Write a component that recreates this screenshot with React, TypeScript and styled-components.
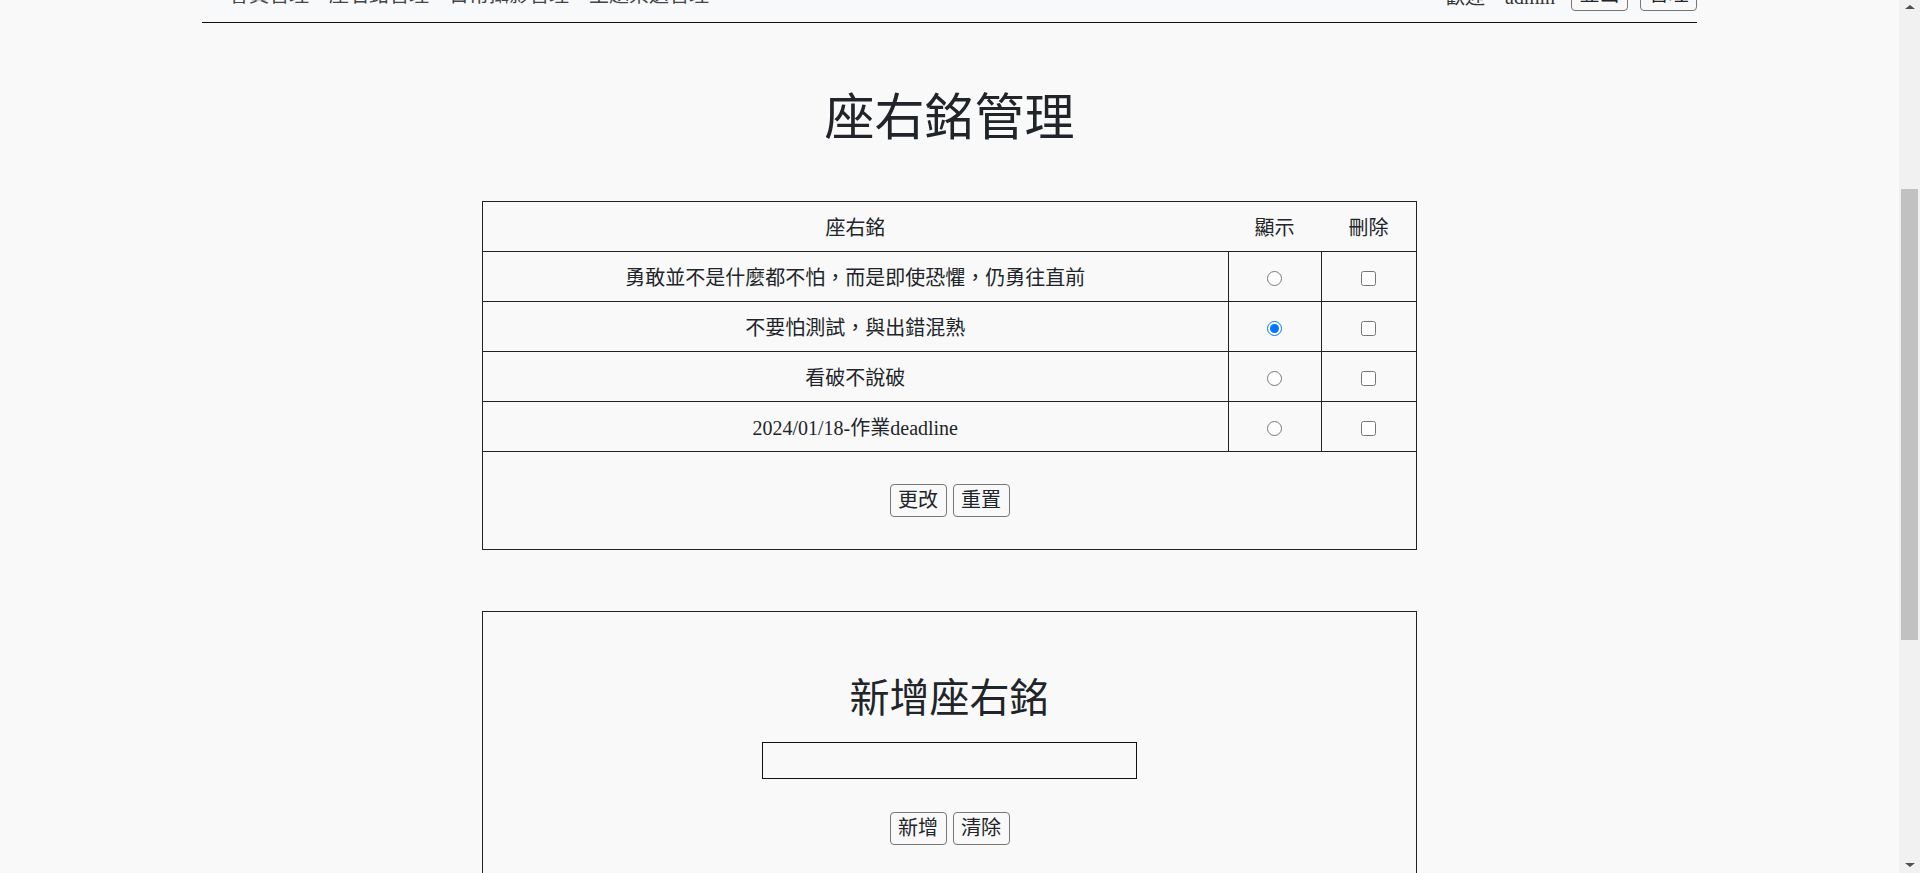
import React, { useLayoutEffect } from 'react'
import styled, { createGlobalStyle } from 'styled-components'

const GlobalStyle = createGlobalStyle`
  html, body {
    margin: 0;
    padding: 0;
  }
  body {
    margin-right: 21px;
    background: #f9f9f9;
    color: #212529;
    font-family: "Liberation Serif", "Noto Sans CJK TC", serif;
  }
`

const mottos = [
  { text: '勇敢並不是什麼都不怕，而是即使恐懼，仍勇往直前', shown: false },
  { text: '不要怕測試，與出錯混熟', shown: true },
  { text: '看破不說破', shown: false },
  { text: '2024/01/18-作業deadline', shown: false },
]

const navItems = ['會員管理', '座右銘管理', '日常攝影管理', '主題票選管理']

export default function App() {
  useLayoutEffect(() => {
    window.scrollTo(0, 336)
  }, [])

  return (
    <>
      <GlobalStyle />
      <Banner />
      <Nav>
        <NavLinks>
          {navItems.map((item) => (
            <NavLink key={item} href="#">
              {item}
            </NavLink>
          ))}
        </NavLinks>
        <NavRight>
          <Welcome>歡迎，admin</Welcome>
          <Button type="button">登出</Button>
          <Button type="button">管理</Button>
        </NavRight>
      </Nav>

      <Main>
        <Title>座右銘管理</Title>

        <Table>
          <thead>
            <tr>
              <HeadCell>座右銘</HeadCell>
              <HeadCell $width={93}>顯示</HeadCell>
              <HeadCell $width={95}>刪除</HeadCell>
            </tr>
          </thead>
          <tbody>
            {mottos.map((m, i) => (
              <tr key={m.text}>
                <Cell>{m.text}</Cell>
                <Cell>
                  <input type="radio" name="shown" defaultChecked={m.shown} value={i} />
                </Cell>
                <Cell>
                  <input type="checkbox" name="del[]" value={i} />
                </Cell>
              </tr>
            ))}
            <tr>
              <ActionCell colSpan={3}>
                <ButtonRow>
                  <Button type="submit">更改</Button>
                  <Button type="reset">重置</Button>
                </ButtonRow>
              </ActionCell>
            </tr>
          </tbody>
        </Table>

        <FormBox>
          <FormTitle>新增座右銘</FormTitle>
          <TextInput type="text" name="motto" />
          <ButtonRow $top={33}>
            <Button type="submit">新增</Button>
            <Button type="reset">清除</Button>
          </ButtonRow>
        </FormBox>
      </Main>

      <ScrollTrack aria-hidden>
        <Arrow $dir="up" />
        <Thumb />
        <Arrow $dir="down" />
      </ScrollTrack>
    </>
  )
}

const Banner = styled.header`
  height: 303px;
`

const Nav = styled.nav`
  width: 1495px;
  margin: 0 auto;
  box-sizing: border-box;
  display: flex;
  align-items: center;
  justify-content: space-between;
  padding: 10px 0 10px 27px;
  background: #f7f9fb;
  border-bottom: 1px solid #111;
`

const NavLinks = styled.div`
  display: flex;
  gap: 20px;
  padding-top: 2px;
`

const NavLink = styled.a`
  font-size: 20px;
  line-height: 29px;
  color: #444;
  text-decoration: none;
`

const NavRight = styled.div`
  display: flex;
  align-items: center;
  gap: 12px;
`

const Welcome = styled.span`
  font-size: 20px;
  line-height: 29px;
  margin-right: 4px;
  padding-top: 6px;
  color: #333;
`

const Button = styled.button`
  font-family: inherit;
  font-size: 20px;
  line-height: 29px;
  padding: 1px 7.5px;
  border: 1px solid #767676;
  border-radius: 4px;
  background: #f9f9f9;
  color: #212529;
  cursor: pointer;
`

const Main = styled.main`
  display: flex;
  flex-direction: column;
  align-items: center;
  padding-bottom: 391px;
`

const Title = styled.h1`
  font-size: 50px;
  line-height: 72px;
  font-weight: normal;
  margin: 59px 0 47px;
`

const Table = styled.table`
  width: 935px;
  border-collapse: collapse;
  border: 1px solid #222;
  font-size: 20px;
  text-align: center;
`

const HeadCell = styled.th<{ $width?: number }>`
  font-weight: normal;
  height: 49px;
  padding: 0;
  width: ${(p) => (p.$width ? `${p.$width}px` : 'auto')};
  border-bottom: 1px solid #222;
`

const Cell = styled.td`
  height: 49px;
  padding: 0;
  border: 1px solid #222;

  input {
    width: 15px;
    height: 15px;
    margin: 0;
    vertical-align: middle;
  }
`

const ActionCell = styled.td`
  height: 97px;
  padding: 0;
  border: 1px solid #222;
`

const ButtonRow = styled.div<{ $top?: number }>`
  display: flex;
  justify-content: center;
  gap: 6px;
  margin-top: ${(p) => p.$top ?? 0}px;
`

const FormBox = styled.section`
  width: 935px;
  box-sizing: border-box;
  margin-top: 61px;
  padding: 58px 0 54px;
  border: 1px solid #222;
  display: flex;
  flex-direction: column;
  align-items: center;
`

const FormTitle = styled.h2`
  font-size: 40px;
  line-height: 58px;
  font-weight: normal;
  margin: 0;
`

const TextInput = styled.input`
  width: 375px;
  height: 37px;
  box-sizing: border-box;
  margin-top: 14px;
  border: 1px solid #111;
  background: #f9f9f9;
  font-size: 20px;
`

/* stand-in for the browser's own scrollbar seen in the screenshot */
const ScrollTrack = styled.div`
  position: fixed;
  top: 0;
  right: 0;
  width: 21px;
  height: 100vh;
  background: #f1f1f1;
  display: flex;
  flex-direction: column;
  align-items: center;
`

const Arrow = styled.div<{ $dir: 'up' | 'down' }>`
  width: 0;
  height: 0;
  margin: ${(p) => (p.$dir === 'up' ? '5px 0 0' : 'auto 0 6px')};
  border-left: 5px solid transparent;
  border-right: 5px solid transparent;
  ${(p) =>
    p.$dir === 'up' ? 'border-bottom: 4px solid #505050;' : 'border-top: 4px solid #505050;'}
`

const Thumb = styled.div`
  width: 17px;
  height: 451px;
  margin-top: 180px;
  background: #c1c1c1;
`
